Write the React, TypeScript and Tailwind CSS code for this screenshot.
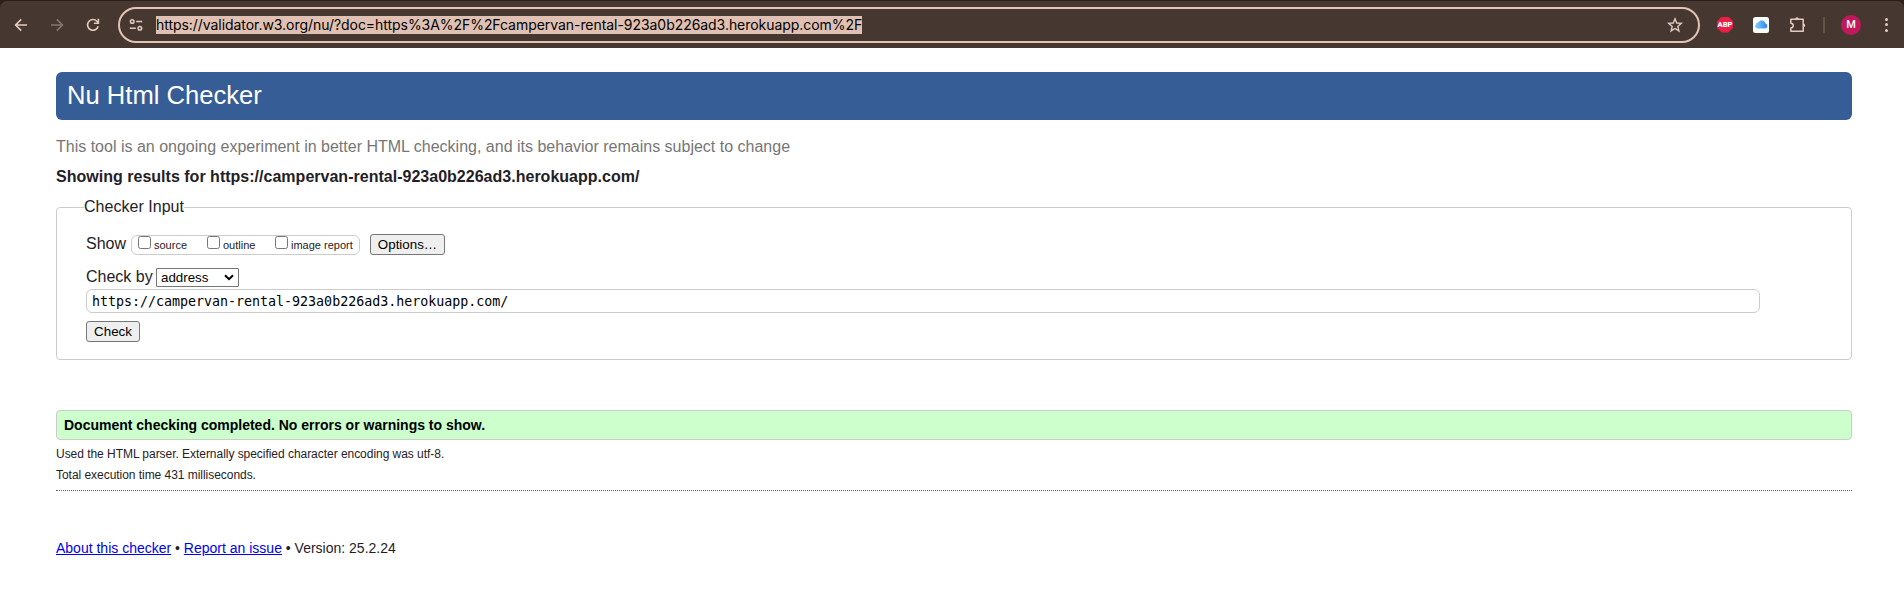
import React from "react";

function BackIcon({ flip = false, className }: { flip?: boolean; className: string }) {
  return (
    <svg viewBox="0 0 16 16" className={flip ? `${className} -scale-x-100` : className} fill="none" stroke="currentColor" strokeWidth="1.6">
      <path d="M14 8H3M8.2 2.4 2.6 8l5.6 5.6" />
    </svg>
  );
}

function ReloadIcon() {
  return (
    <svg viewBox="0 0 16 16" className="size-4 text-[#e3cabd]" fill="none" stroke="currentColor" strokeWidth="1.6">
      <path d="M13.2 9.2A5.4 5.4 0 1 1 11.9 4.2L13.4 6" />
      <path d="M13.4 1.8V6.3H8.9" />
    </svg>
  );
}

function SiteSettingsIcon() {
  return (
    <svg viewBox="0 0 14 14" className="size-3.5 text-[#e3cabd]" fill="none" stroke="currentColor" strokeWidth="1.5">
      <circle cx="3.2" cy="3.5" r="1.8" />
      <path d="M7.2 3.5H13.2M.8 10.3H6.8" />
      <circle cx="10.9" cy="10.3" r="1.8" />
    </svg>
  );
}

function StarIcon() {
  return (
    <svg viewBox="0 0 16 16" className="size-4 text-[#dcc9c0]" fill="none" stroke="currentColor" strokeWidth="1.4">
      <path d="m8 1.8 1.7 4.2 4.6.4-3.5 3 1.1 4.5L8 11.5l-3.9 2.4 1.1-4.5-3.5-3 4.6-.4z" />
    </svg>
  );
}

function AdblockIcon() {
  return (
    <span className="flex size-4 items-center justify-center bg-[#ed1e45] font-['Roboto',sans-serif] text-[7.6px] leading-4 font-black text-white [clip-path:polygon(30%_0,70%_0,100%_30%,100%_70%,70%_100%,30%_100%,0_70%,0_30%)]">
      ABP
    </span>
  );
}

function CloudIcon() {
  return (
    <svg viewBox="0 0 16 16" className="size-4">
      <defs>
        <linearGradient id="cloud" x1="0" x2="1">
          <stop offset="0" stopColor="#7fd0fb" />
          <stop offset="1" stopColor="#2b86f0" />
        </linearGradient>
      </defs>
      <rect width="16" height="16" rx="2.5" fill="#fff" />
      <path d="M4.2 11.6A2.5 2.5 0 0 1 3.3 7 2.2 2.2 0 0 1 5.5 5.2 3.9 3.9 0 0 1 12.6 6.4 2.7 2.7 0 0 1 12 11.6z" fill="url(#cloud)" />
    </svg>
  );
}

function PuzzleIcon() {
  return (
    <svg viewBox="0 0 18 18" className="size-[18px] text-[#e3cabd]" fill="none" stroke="currentColor" strokeWidth="1.5" strokeLinejoin="round">
      <path d="M1.8 3.2H14.2V15.3H1.8V12A2.4 2.4 0 0 0 1.8 7.2z" />
      <path d="M6.2 3a1.8 1.8 0 0 1 3.6 0zM14.4 7.6a1.8 1.8 0 0 1 0 3.6z" fill="currentColor" stroke="none" />
    </svg>
  );
}

function Toolbar() {
  return (
    <div className="bg-[#2c1e19] pt-px">
      <header className="flex h-[47px] items-center rounded-t-[7px] bg-[#463831]">
        <div className="flex w-[118px] shrink-0 items-center pl-[13px]">
          <BackIcon className="size-4 text-[#e3cabd]" />
          <BackIcon flip className="ml-5 size-4 text-[#85756c]" />
          <span className="ml-5"><ReloadIcon /></span>
        </div>
        <div className="flex h-9 w-[1582px] shrink-0 items-center rounded-full border-2 border-[#e3c3b3] pl-[9px] pr-[15px]">
          <SiteSettingsIcon />
          <span className="ml-[13px] h-[18px] w-[706px] whitespace-nowrap bg-[#dfc0b2] font-['Inter',sans-serif] text-[14px] leading-[17px] tracking-[-0.05px] text-black">
            https://validator.w3.org/nu/?doc=https%3A%2F%2Fcampervan-rental-923a0b226ad3.herokuapp.com%2F
          </span>
          <span className="ml-auto"><StarIcon /></span>
        </div>
        <div className="flex flex-1 items-center pl-[17px]">
          <AdblockIcon />
          <span className="ml-5"><CloudIcon /></span>
          <span className="ml-5"><PuzzleIcon /></span>
          <span className="ml-[16px] h-4 w-0.5 bg-[#65534a]" />
          <span className="ml-4 flex size-5 items-center justify-center rounded-full bg-[#c2185b] font-['Roboto',sans-serif] text-[11px] leading-5 font-medium text-white"><span className="pt-px">M</span></span>
          <span className="ml-[24px] flex flex-col gap-[2.5px]">
            <span className="size-[3px] rounded-full bg-[#e3cabd]" />
            <span className="size-[3px] rounded-full bg-[#e3cabd]" />
            <span className="size-[3px] rounded-full bg-[#e3cabd]" />
          </span>
        </div>
      </header>
    </div>
  );
}

function ShowOption({ label, className }: { label: string; className: string }) {
  return (
    <label className={`flex h-full items-start ${className}`}>
      <input type="checkbox" className="size-[13px] shrink-0 appearance-none rounded-[2.5px] border border-[#767676] bg-white" />
      <span className="ml-[3px] mt-[2px] whitespace-nowrap text-[11px] leading-[14px]">{label}</span>
    </label>
  );
}

const buttonClass = "rounded-[3px] border border-[#767676] bg-[#efefef] text-[13.33px] text-black";

function CheckerForm() {
  return (
    <fieldset className="mt-2 h-[163px] rounded-[4px] border border-[#ccc] pl-[29px]">
      <legend className="-ml-[2px] h-5 text-[16px] leading-5 tracking-[0.03px]">Checker Input</legend>
      <div className="mt-[17px] flex h-5 items-center">
        <span className="w-[45px] leading-5">Show</span>
        <div className="mt-[2px] flex h-5 w-[229px] rounded-[6px] border border-[#ccc] pl-[6px]">
          <ShowOption label="source" className="w-[69px]" />
          <ShowOption label="outline" className="w-[68px]" />
          <ShowOption label="image report" className="" />
        </div>
        <button className={`${buttonClass} ml-[10px] h-[21px] w-[75px]`}>Options…</button>
      </div>
      <div className="mt-[13px] flex h-5 items-center">
        <span className="w-[70px] whitespace-nowrap leading-5">Check by</span>
        <div className="flex h-[19px] w-[83px] items-center justify-between rounded-[1px] border border-[#767676] bg-white pl-1 pr-1 text-[13.33px] leading-[17px] text-black">
          address
          <svg viewBox="0 0 10 7" className="h-[7px] w-[10px]" fill="none" stroke="#000" strokeWidth="2"><path d="m1 1.2 4 4 4-4" /></svg>
        </div>
      </div>
      <input
        defaultValue="https://campervan-rental-923a0b226ad3.herokuapp.com/"
        className="mt-[2px] block h-6 w-[1674px] rounded-[6px] border border-[#ccc] bg-white px-[5px] font-['DejaVu_Sans_Mono',monospace] text-[13.33px] tracking-[-0.02px] text-black outline-none"
      />
      <button className={`${buttonClass} mt-2 block h-[21px] w-[54px]`}>Check</button>
    </fieldset>
  );
}

export default function App() {
  return (
    <div className="h-[590px] overflow-hidden bg-white font-['Liberation_Sans',Arial,sans-serif] text-[16px] text-[#1f2126]">
      <Toolbar />
      <main className="ml-14 w-[1796px] pt-6">
        <h1 className="h-12 rounded-[6px] bg-[#365d95] pl-[11px] text-[25.6px] leading-[46px] text-white">Nu Html Checker</h1>
        <p className="mt-[15px] leading-6 text-[#767676]">This tool is an ongoing experiment in better HTML checking, and its behavior remains subject to change</p>
        <h2 className="mt-[6px] leading-6 font-bold tracking-[0.015px]">Showing results for https://campervan-rental-923a0b226ad3.herokuapp.com/</h2>
        <CheckerForm />
        <p className="mt-[50px] h-[30px] rounded-[4px] border border-[#ccc] bg-[#ccffcc] pl-[7px] text-[14px] leading-[28px] font-bold text-black">Document checking completed. No errors or warnings to show.</p>
        <p className="mt-1 text-[12px] leading-5 tracking-[-0.04px]">Used the HTML parser. Externally specified character encoding was utf-8.</p>
        <p className="mt-[1px] text-[12px] leading-5 tracking-[-0.04px]">Total execution time 431 milliseconds.</p>
        <hr className="mt-[5px] border-t border-dotted border-[#666]" />
        <footer className="mt-[47px] text-[14px] leading-5">
          <a className="text-[#0000ee] underline">About this checker</a> • <a className="text-[#0000ee] underline">Report an issue</a> • Version: 25.2.24
        </footer>
      </main>
    </div>
  );
}
